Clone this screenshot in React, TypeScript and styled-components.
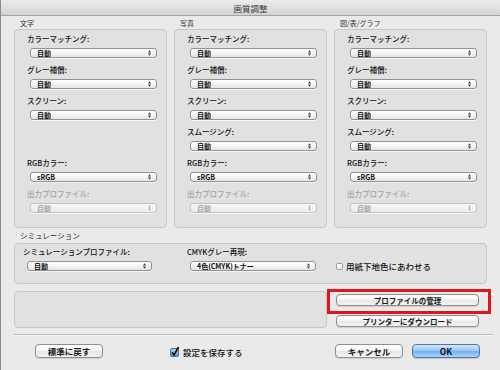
import { createGlobalStyle, styled } from "styled-components";

const GlobalStyle = createGlobalStyle`
  html, body {
    margin: 0;
    padding: 0;
  }
  body {
    font-family: "Noto Sans CJK JP", "Liberation Sans", sans-serif;
    background: #e9e9e9;
    color: #1a1a1a;
  }
`;

interface FieldData {
  label: string;
  value: string;
  disabled?: boolean;
  hidden?: boolean;
}

const auto = "自動";

const columns: { title: string; fields: FieldData[] }[] = [
  {
    title: "文字",
    fields: [
      { label: "カラーマッチング:", value: auto },
      { label: "グレー補償:", value: auto },
      { label: "スクリーン:", value: auto },
      { label: "スムージング:", value: auto, hidden: true },
      { label: "RGBカラー:", value: "sRGB" },
      { label: "出力プロファイル:", value: auto, disabled: true },
    ],
  },
  {
    title: "写真",
    fields: [
      { label: "カラーマッチング:", value: auto },
      { label: "グレー補償:", value: auto },
      { label: "スクリーン:", value: auto },
      { label: "スムージング:", value: auto },
      { label: "RGBカラー:", value: "sRGB" },
      { label: "出力プロファイル:", value: auto, disabled: true },
    ],
  },
  {
    title: "図/表/グラフ",
    fields: [
      { label: "カラーマッチング:", value: auto },
      { label: "グレー補償:", value: auto },
      { label: "スクリーン:", value: auto },
      { label: "スムージング:", value: auto },
      { label: "RGBカラー:", value: "sRGB" },
      { label: "出力プロファイル:", value: auto, disabled: true },
    ],
  },
];

const Arrows = () => (
  <svg width="3" height="6" viewBox="0 0 3 6">
    <path d="M0 2.5 L1.5 0.3 L3 2.5 Z M0 3.5 L1.5 5.7 L3 3.5 Z" fill="currentColor" />
  </svg>
);

const Select = ({
  value,
  disabled,
  width,
}: {
  value: string;
  disabled?: boolean;
  width?: number;
}) => (
  <SelectBox $disabled={disabled} style={width ? { width } : undefined}>
    <span>{value}</span>
    <ArrowWrap $disabled={disabled}>
      <Arrows />
    </ArrowWrap>
  </SelectBox>
);

const CheckBox = ({ checked }: { checked?: boolean }) =>
  checked ? (
    <svg width="10" height="11" viewBox="0 0 10 11">
      <defs>
        <linearGradient id="cb" x1="0" y1="0" x2="0" y2="1">
          <stop offset="0" stopColor="#b9d8f6" />
          <stop offset="1" stopColor="#5f9be0" />
        </linearGradient>
      </defs>
      <rect x="0.5" y="2.5" width="8" height="8" rx="1.5" fill="url(#cb)" stroke="#4d6f9e" />
      <path d="M2 6.2 L4 9 L8.6 1" fill="none" stroke="#111" strokeWidth="1.6" />
    </svg>
  ) : (
    <EmptyCheck />
  );

export default function App() {
  return (
    <>
      <GlobalStyle />
      <Window>
        <TitleBar>画質調整</TitleBar>
        <Content>
          <Columns>
            {columns.map((col) => (
              <Column key={col.title}>
                <Heading>{col.title}</Heading>
                <GroupBox>
                  {col.fields.map((f) => (
                    <Field key={f.label} $hidden={f.hidden}>
                      <Label $disabled={f.disabled}>{f.label}</Label>
                      <Indent>
                        <Select value={f.value} disabled={f.disabled} />
                      </Indent>
                    </Field>
                  ))}
                </GroupBox>
              </Column>
            ))}
          </Columns>

          <SectionHeading>シミュレーション</SectionHeading>
          <SimBox>
            <Field>
              <Label>シミュレーションプロファイル:</Label>
              <SimIndent $left={4}>
                <Select value={auto} width={125} />
              </SimIndent>
            </Field>
            <Field>
              <Label>CMYKグレー再現:</Label>
              <SimIndent $left={3}>
                <Select value="4色(CMYK)トナー" width={126} />
              </SimIndent>
            </Field>
            <CheckRow>
              <CheckBox />
              <CheckText>用紙下地色にあわせる</CheckText>
            </CheckRow>
          </SimBox>

          <LowerRow>
            <EmptyBox />
            <ButtonColumn>
              <Button $height={12}>プロファイルの管理</Button>
              <Button $height={12}>プリンターにダウンロード</Button>
              <Highlight />
            </ButtonColumn>
          </LowerRow>

          <Separator />

          <BottomRow>
            <Button $height={14} $width={68} $size={8.5}>
              標準に戻す
            </Button>
            <SaveCheck>
              <CheckBox checked />
              <CheckText>設定を保存する</CheckText>
            </SaveCheck>
            <Spacer />
            <Button $height={14} $width={68} $size={8.5}>
              キャンセル
            </Button>
            <PrimaryButton>OK</PrimaryButton>
          </BottomRow>
        </Content>
      </Window>
    </>
  );
}

const Window = styled.div`
  width: 500px;
  height: 370px;
  box-sizing: border-box;
  border-left: 1px solid #8c8c8c;
  background: #eaeaea;
  overflow: hidden;
`;

const TitleBar = styled.div`
  height: 16px;
  box-sizing: border-box;
  display: flex;
  align-items: center;
  justify-content: center;
  background: linear-gradient(#ececec, #d3d3d3);
  border-bottom: 1px solid #a2a2a2;
  font-size: 8.5px;
  color: #3a3a3a;
`;

const Content = styled.div`
  padding: 0 13px;
`;

const Columns = styled.div`
  display: grid;
  grid-template-columns: repeat(3, 1fr);
  column-gap: 7px;
  margin-top: 2px;
`;

const Column = styled.div`
  display: flex;
  flex-direction: column;
`;

const Heading = styled.div`
  height: 11px;
  line-height: 11px;
  padding-left: 6px;
  font-size: 7px;
  color: #333;
`;

const GroupBox = styled.div`
  height: 199px;
  box-sizing: border-box;
  padding: 4px 9px 0 12px;
  background: #e1e1e1;
  border: 1px solid #c8c8c8;
  border-radius: 4px;
  display: flex;
  flex-direction: column;
  gap: 7px;
`;

const Field = styled.div<{ $hidden?: boolean }>`
  display: flex;
  flex-direction: column;
  gap: 4px;
  visibility: ${(p) => (p.$hidden ? "hidden" : "visible")};
`;

const Label = styled.div<{ $disabled?: boolean }>`
  height: 10px;
  line-height: 10px;
  font-size: 7.5px;
  font-weight: 500;
  white-space: nowrap;
  color: ${(p) => (p.$disabled ? "#a3a3a3" : "#111")};
`;

const Indent = styled.div`
  padding-left: 3px;
`;

const SimIndent = styled.div<{ $left: number }>`
  padding-left: ${(p) => p.$left}px;
`;

const SelectBox = styled.div<{ $disabled?: boolean }>`
  height: 10px;
  box-sizing: border-box;
  display: flex;
  align-items: center;
  justify-content: space-between;
  padding: 0 5px 0 6px;
  border: 1px solid ${(p) => (p.$disabled ? "#c3c3c3" : "#939393")};
  border-radius: 3px;
  background: ${(p) =>
    p.$disabled
      ? "linear-gradient(#f6f6f6, #ececec)"
      : "linear-gradient(#ffffff, #f3f3f3 55%, #e4e4e4)"};
  box-shadow: 0 1px 0 rgba(255, 255, 255, 0.7);
  font-size: 7px;
  font-weight: 700;
  line-height: 8px;
  white-space: nowrap;
  color: ${(p) => (p.$disabled ? "#a6a6a6" : "#111")};
`;

const ArrowWrap = styled.span<{ $disabled?: boolean }>`
  display: flex;
  color: ${(p) => (p.$disabled ? "#b0b0b0" : "#333")};
`;

const SectionHeading = styled.div`
  height: 12px;
  line-height: 12px;
  margin-top: 2px;
  padding-left: 6px;
  font-size: 7.5px;
  color: #2a2a2a;
`;

const SimBox = styled.div`
  margin-top: 1px;
  height: 41px;
  box-sizing: border-box;
  padding: 3px 0 0 8px;
  background: #e1e1e1;
  border: 1px solid #c8c8c8;
  border-radius: 4px;
  display: grid;
  grid-template-columns: 164px 146px 1fr;
  align-items: start;
`;

const CheckRow = styled.div`
  display: flex;
  align-items: center;
  gap: 3px;
  margin-left: 3px;
  margin-top: 14px;
  height: 10px;
`;

const EmptyCheck = styled.span`
  width: 7px;
  height: 7px;
  box-sizing: border-box;
  border: 1px solid #9a9a9a;
  border-radius: 1.5px;
  background: linear-gradient(#ffffff, #e9e9e9);
`;

const CheckText = styled.span`
  font-size: 8.5px;
  font-weight: 500;
  line-height: 10px;
  white-space: nowrap;
  color: #111;
`;

const LowerRow = styled.div`
  display: flex;
  margin-top: 7px;
`;

const EmptyBox = styled.div`
  flex: 0 0 313px;
  height: 37px;
  box-sizing: border-box;
  background: #e1e1e1;
  border: 1px solid #c8c8c8;
  border-radius: 4px;
`;

const ButtonColumn = styled.div`
  position: relative;
  width: 143px;
  margin-left: 9px;
  padding-top: 3px;
  display: flex;
  flex-direction: column;
  gap: 9px;
`;

const Button = styled.div<{ $height: number; $width?: number; $size?: number }>`
  height: ${(p) => p.$height}px;
  width: ${(p) => (p.$width ? `${p.$width}px` : "auto")};
  box-sizing: border-box;
  display: flex;
  align-items: center;
  justify-content: center;
  border: 1px solid #8e8e8e;
  border-radius: 4px;
  background: linear-gradient(#ffffff, #f4f4f4 50%, #e6e6e6 51%, #f4f4f4);
  box-shadow: 0 1px 1px rgba(0, 0, 0, 0.12);
  font-size: ${(p) => p.$size ?? 7.5}px;
  font-weight: 700;
  white-space: nowrap;
  color: #1a1a1a;
`;

const PrimaryButton = styled.div`
  height: 14px;
  width: 68px;
  margin-left: 9px;
  box-sizing: border-box;
  display: flex;
  align-items: center;
  justify-content: center;
  border: 1px solid #4f73a6;
  border-radius: 4px;
  background: linear-gradient(#d3e8fc, #9cc8f3 45%, #74afec 55%, #a8d4fb);
  box-shadow: 0 1px 1px rgba(0, 0, 0, 0.15);
  font-size: 8.5px;
  font-weight: 700;
  color: #111;
`;

const Highlight = styled.div`
  position: absolute;
  left: -9px;
  top: -2px;
  width: 164px;
  height: 25px;
  box-sizing: border-box;
  border: 3px solid #e3141c;
  pointer-events: none;
`;

const Separator = styled.div`
  margin-top: 6px;
  margin-right: -6px;
  height: 1px;
  background: #b8b8b8;
  border-bottom: 1px solid #f7f7f7;
`;

const BottomRow = styled.div`
  display: flex;
  align-items: center;
  margin-top: 8px;
  padding: 0 7px 0 21px;
`;

const SaveCheck = styled.div`
  display: flex;
  align-items: flex-end;
  gap: 3px;
  margin-left: 67px;
`;

const Spacer = styled.div`
  flex: 1;
`;
